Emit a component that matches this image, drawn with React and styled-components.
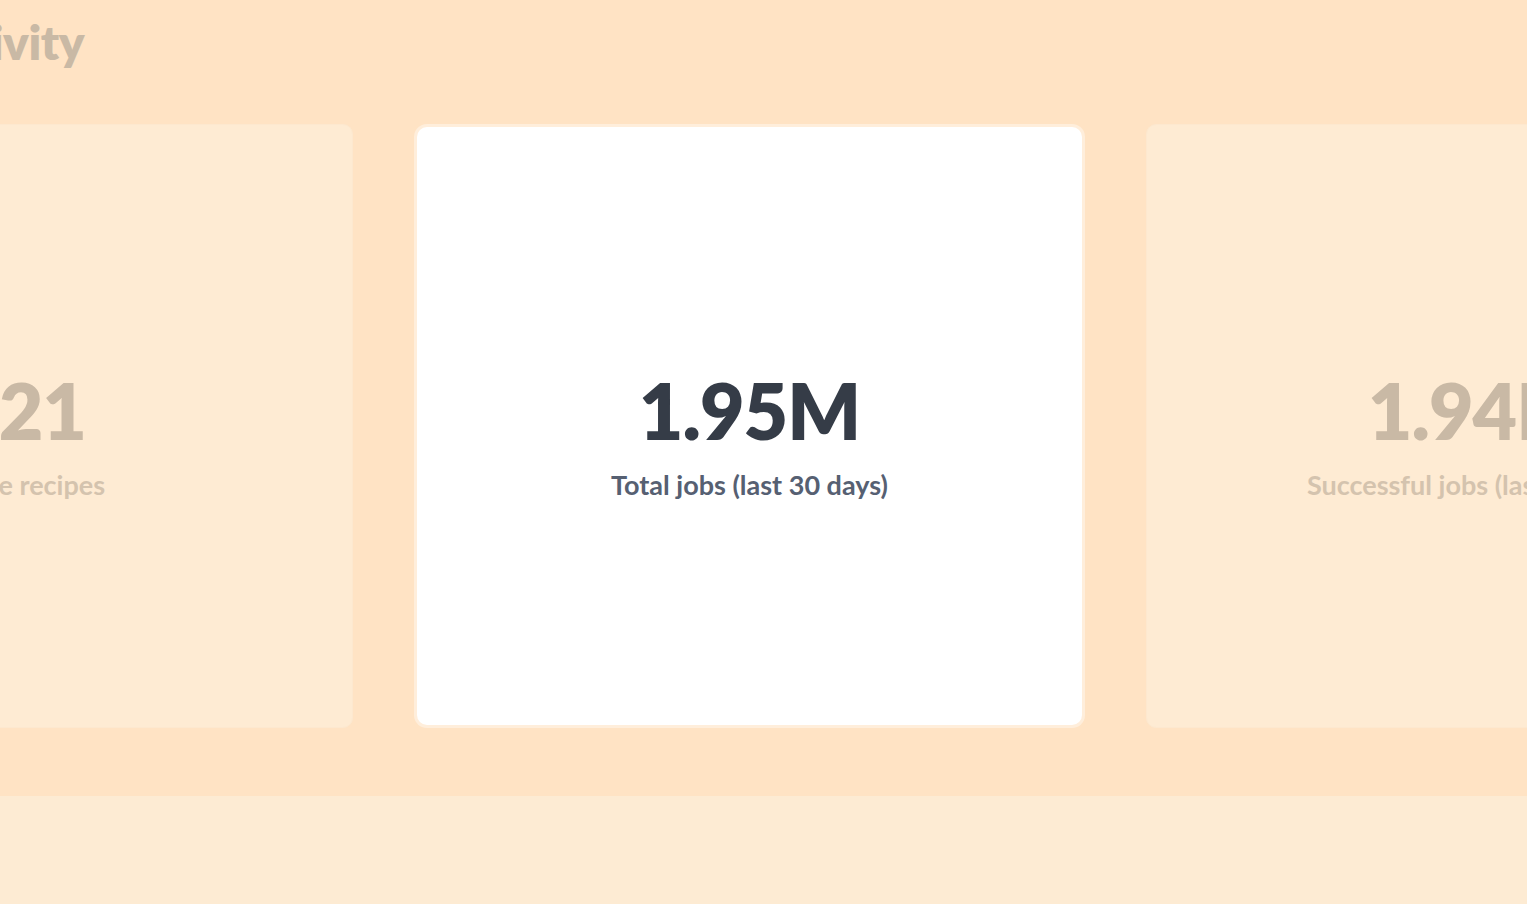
import React from 'react'
import styled, {createGlobalStyle} from 'styled-components'

const Global = createGlobalStyle`
  html, body {
    margin: 0;
    padding: 0;
    background: #fdebd3;
    overflow: hidden;
  }
  body {
    font-family: "Lato", "Open Sans", sans-serif;
  }
`

const Page = styled.div`
  width: 1527px;
  height: 904px;
  display: flex;
  flex-direction: column;
  overflow: hidden;
  background: #fdebd3;
`

const Band = styled.section`
  height: 796px;
  background: #ffe3c4;
  display: flex;
  flex-direction: column;
  box-sizing: border-box;
  padding-top: 6px;
`

const Title = styled.h1`
  margin: 0 0 0 -83px;
  font-size: 48px;
  line-height: 72px;
  font-weight: 800;
  letter-spacing: -0.5px;
  color: #c9b9a5;
  white-space: nowrap;
`

const Row = styled.div`
  display: flex;
  align-items: center;
  gap: 64px;
  margin-top: 46px;
  margin-left: -312px;
`

const Card = styled.div`
  flex: 0 0 665px;
  height: ${p => (p.$active ? '598px' : '604px')};
  box-sizing: border-box;
  border-radius: 10px;
  display: flex;
  flex-direction: column;
  align-items: center;
  justify-content: center;
  padding-top: 20px;
  background: ${p => (p.$active ? '#ffffff' : '#feebd3')};
  box-shadow: ${p => (p.$active ? '0 0 0 3px #ffeedb' : 'none')};
  border: ${p => (p.$active ? '0' : '1px solid #fde8cf')};
`

const Value = styled.div`
  font-size: 77px;
  line-height: 1;
  font-weight: 800;
  letter-spacing: -1px;
  color: ${p => (p.$active ? '#353c47' : '#c9b9a5')};
`

const Label = styled.div`
  margin-top: 19px;
  font-size: 27px;
  font-weight: 700;
  color: ${p => (p.$active ? '#566072' : '#d4c3ae')};
`

const stats = [
  {value: '121', label: 'Active recipes'},
  {value: '1.95M', label: 'Total jobs (last 30 days)', active: true},
  {value: '1.94M', label: 'Successful jobs (last 30 days)'},
]

export default function App(){
  const cards = stats.map(s => (
    <Card key={s.label} $active={s.active}>
      <Value $active={s.active}>{s.value}</Value>
      <Label $active={s.active}>{s.label}</Label>
    </Card>
  ))

  return(
    <Page>
      <Global />
      <Band>
        <Title>Activity</Title>
        <Row>
          {cards}
        </Row>
      </Band>
    </Page>
  )
}
